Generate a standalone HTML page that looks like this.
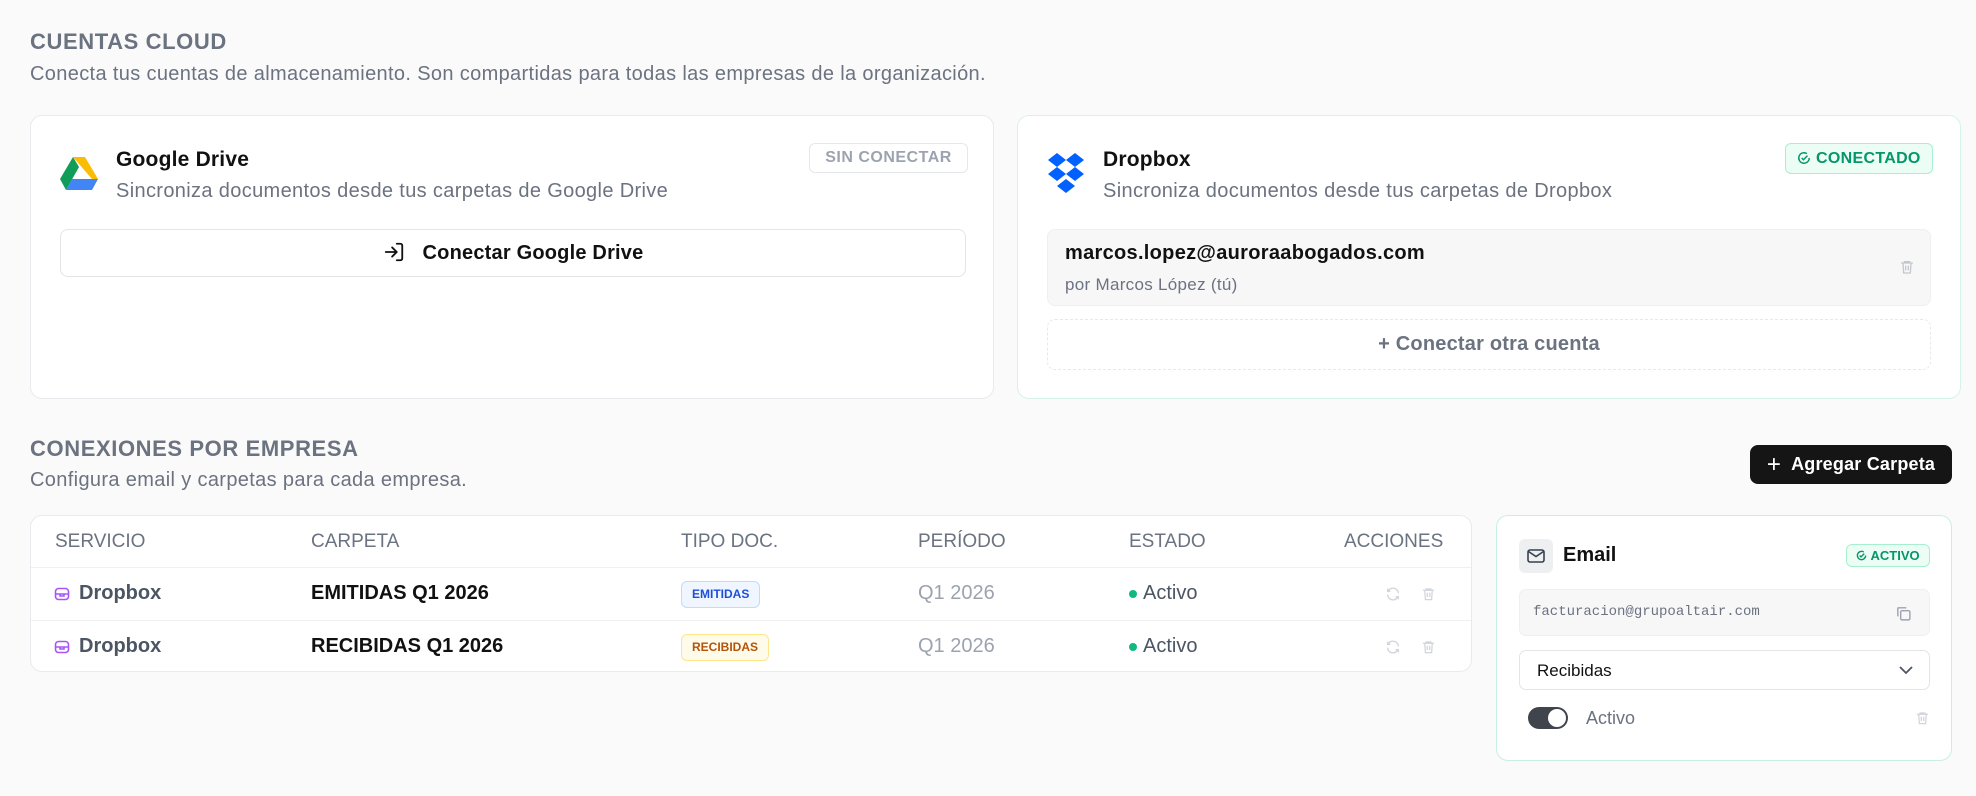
<!DOCTYPE html>
<html><head><meta charset="utf-8"><style>
*{box-sizing:border-box;margin:0;padding:0}
body{width:1976px;height:796px;background:#fafafa;font-family:"Liberation Sans",sans-serif;position:relative;overflow:hidden;color:#111}
.a{position:absolute;white-space:nowrap}
.card{position:absolute;background:#fff;border:1px solid #e8eaed;border-radius:12px}
.h{font-size:22px;font-weight:bold;color:#6b7280;letter-spacing:0.6px}
.sub{font-size:20px;color:#6b7280;letter-spacing:0.35px}
.gray{color:#6b7280}
.th{font-size:19px;color:#6b7280;font-weight:500}
.td{font-size:20px}
.row{position:absolute;left:0;right:0;border-top:1px solid #eef0f2}
.t{font-size:21px;font-weight:bold;letter-spacing:0.2px}
</style></head><body>
<div class="a h" style="left:30px;top:29px">CUENTAS CLOUD</div>
<div class="a sub" style="left:30px;top:63px">Conecta tus cuentas de almacenamiento. Son compartidas para todas las empresas de la organización.</div>

<div class="card" style="left:30px;top:115px;width:964px;height:284px">
  <svg class="a" style="left:29px;top:41px" width="38" height="34" viewBox="0 0 38 34"><polygon points="13,0 25,0 38,22 32,22" fill="#fbbc04"/><polygon points="13,0 19,10 6,33 0,22" fill="#0f9d58"/><polygon points="6,33 12,22 38,22 32,33" fill="#4285f4"/></svg>
  <div class="a t" style="left:85px;top:32px">Google Drive</div>
  <div class="a sub" style="left:85px;top:64px">Sincroniza documentos desde tus carpetas de Google Drive</div>
  <div class="a" style="left:778px;top:27px;width:159px;height:30px;border:1px solid #e5e7eb;border-radius:6px;font-size:16px;font-weight:bold;color:#9ca3af;text-align:center;line-height:28px;letter-spacing:0.5px">SIN CONECTAR</div>
  <div class="a" style="left:29px;top:113px;width:906px;height:48px;border:1px solid #e2e4e8;border-radius:8px;text-align:center;line-height:46px;font-size:20px;font-weight:bold;color:#111;letter-spacing:0.2px">
    <svg style="vertical-align:-4px;margin-right:18px" width="22" height="22" viewBox="0 0 24 24" fill="none" stroke="#111" stroke-width="2" stroke-linecap="round" stroke-linejoin="round"><path d="M15 3h4a2 2 0 0 1 2 2v14a2 2 0 0 1-2 2h-4M10 17l5-5-5-5M15 12H3"/></svg>Conectar Google Drive</div>
</div>

<div class="card" style="left:1017px;top:115px;width:944px;height:284px;border-color:#d6f3e8">
  <svg class="a" style="left:29px;top:37px" width="38" height="42" viewBox="0 0 38 42" fill="#0061fe"><polygon points="10,0 19,7 10,14 1,7"/><polygon points="28,0 37,7 28,14 19,7"/><polygon points="10,14 19,21 10,28 1,21"/><polygon points="28,14 37,21 28,28 19,21"/><polygon points="19,26 28,33 19,40 10,33"/></svg>
  <div class="a t" style="left:85px;top:32px">Dropbox</div>
  <div class="a sub" style="left:85px;top:64px">Sincroniza documentos desde tus carpetas de Dropbox</div>
  <div class="a" style="left:767px;top:27px;width:148px;height:31px;border:1px solid #a7f0cf;background:#ecfdf5;border-radius:6px;font-size:16px;font-weight:bold;color:#059669;text-align:center;line-height:29px;letter-spacing:0.3px">
   <svg style="vertical-align:-2px" width="14" height="14" viewBox="0 0 24 24" fill="none" stroke="#059669" stroke-width="2.5"><path d="M21 12a9 9 0 1 1-4-7.5"/><path d="M8 12l3 3 7-7"/></svg> CONECTADO</div>
  <div class="a" style="left:29px;top:113px;width:884px;height:77px;background:#f7f7f8;border:1px solid #efeff1;border-radius:8px">
    <div class="a" style="left:17px;top:12px;font-size:20px;font-weight:bold;letter-spacing:0.3px">marcos.lopez@auroraabogados.com</div>
    <div class="a gray" style="left:17px;top:45px;font-size:17px;letter-spacing:0.3px">por Marcos López (tú)</div>
    <svg class="a" style="left:851px;top:28px" width="16" height="18" viewBox="0 0 24 24" fill="none" stroke="#c4c7cc" stroke-width="2"><path d="M3 6h18M8 6V4h8v2M6 6l1 15h10l1-15M10 10v7M14 10v7"/></svg>
  </div>
  <div class="a" style="left:29px;top:203px;width:884px;height:51px;border:1.5px dashed #e6e8eb;border-radius:8px;text-align:center;line-height:48px;font-size:20px;font-weight:bold;color:#6b7280;letter-spacing:0.2px">+ Conectar otra cuenta</div>
</div>

<div class="a h" style="left:30px;top:436px">CONEXIONES POR EMPRESA</div>
<div class="a sub" style="left:30px;top:469px">Configura email y carpetas para cada empresa.</div>
<div class="a" style="left:1750px;top:445px;width:202px;height:39px;background:#151515;border-radius:8px;color:#fff;font-size:18px;font-weight:bold;text-align:center;line-height:39px;letter-spacing:0.2px"><span style="font-size:24px;vertical-align:-2px;margin-right:10px;font-weight:normal">+</span>Agregar Carpeta</div>

<div class="card" style="left:30px;top:515px;width:1442px;height:157px">
  <div class="a th" style="left:24px;top:15px">SERVICIO</div>
  <div class="a th" style="left:280px;top:15px">CARPETA</div>
  <div class="a th" style="left:650px;top:15px">TIPO DOC.</div>
  <div class="a th" style="left:887px;top:15px">PERÍODO</div>
  <div class="a th" style="left:1098px;top:15px">ESTADO</div>
  <div class="a th" style="left:1313px;top:15px">ACCIONES</div>
  <div class="row" style="top:51px;height:53px">
    <svg class="a" style="left:23px;top:18px" width="16" height="16" viewBox="0 0 16 16" fill="none" stroke="#a855f7" stroke-width="1.6"><rect x="1.5" y="2.5" width="13" height="11" rx="3"/><path d="M1.5 8h13M6 8v2h4V8"/></svg>
    <div class="a td gray" style="left:48px;top:14px;font-weight:bold;color:#4b5563">Dropbox</div>
    <div class="a td" style="left:280px;top:14px;font-weight:bold">EMITIDAS Q1 2026</div>
    <div class="a" style="left:650px;top:13px;height:27px;padding:0 10px;border:1px solid #bfdbfe;background:#eff6ff;border-radius:6px;font-size:12px;font-weight:bold;color:#1d4ed8;line-height:25px">EMITIDAS</div>
    <div class="a td" style="left:887px;top:14px;color:#9ca3af">Q1 2026</div>
    <div class="a" style="left:1098px;top:22px;width:8px;height:8px;border-radius:50%;background:#10b981"></div>
    <div class="a td" style="left:1112px;top:14px;color:#4b5563">Activo</div>
    <svg class="a" style="left:1354px;top:18px" width="16" height="16" viewBox="0 0 24 24" fill="none" stroke="#d1d5db" stroke-width="2"><path d="M20 11a8 8 0 0 0-14-5l-2 2M4 13a8 8 0 0 0 14 5l2-2M4 4v4h4M20 20v-4h-4"/></svg>
    <svg class="a" style="left:1390px;top:18px" width="15" height="16" viewBox="0 0 24 24" fill="none" stroke="#d1d5db" stroke-width="2"><path d="M3 6h18M8 6V4h8v2M6 6l1 15h10l1-15M10 10v7M14 10v7"/></svg>
  </div>
  <div class="row" style="top:104px;height:53px">
    <svg class="a" style="left:23px;top:18px" width="16" height="16" viewBox="0 0 16 16" fill="none" stroke="#a855f7" stroke-width="1.6"><rect x="1.5" y="2.5" width="13" height="11" rx="3"/><path d="M1.5 8h13M6 8v2h4V8"/></svg>
    <div class="a td gray" style="left:48px;top:14px;font-weight:bold;color:#4b5563">Dropbox</div>
    <div class="a td" style="left:280px;top:14px;font-weight:bold">RECIBIDAS Q1 2026</div>
    <div class="a" style="left:650px;top:13px;height:27px;padding:0 10px;border:1px solid #fde68a;background:#fffbeb;border-radius:6px;font-size:12px;font-weight:bold;color:#b45309;line-height:25px">RECIBIDAS</div>
    <div class="a td" style="left:887px;top:14px;color:#9ca3af">Q1 2026</div>
    <div class="a" style="left:1098px;top:22px;width:8px;height:8px;border-radius:50%;background:#10b981"></div>
    <div class="a td" style="left:1112px;top:14px;color:#4b5563">Activo</div>
    <svg class="a" style="left:1354px;top:18px" width="16" height="16" viewBox="0 0 24 24" fill="none" stroke="#d1d5db" stroke-width="2"><path d="M20 11a8 8 0 0 0-14-5l-2 2M4 13a8 8 0 0 0 14 5l2-2M4 4v4h4M20 20v-4h-4"/></svg>
    <svg class="a" style="left:1390px;top:18px" width="15" height="16" viewBox="0 0 24 24" fill="none" stroke="#d1d5db" stroke-width="2"><path d="M3 6h18M8 6V4h8v2M6 6l1 15h10l1-15M10 10v7M14 10v7"/></svg>
  </div>
</div>

<div class="card" style="left:1496px;top:515px;width:456px;height:246px;border-color:#c8f0df">
  <div class="a" style="left:22px;top:23px;width:34px;height:34px;background:#eeeff1;border-radius:6px">
    <svg class="a" style="left:8px;top:9px" width="18" height="16" viewBox="0 0 18 16" fill="none" stroke="#374151" stroke-width="1.6"><rect x="1" y="2" width="16" height="12" rx="2"/><path d="M1.5 3.5l7.5 5 7.5-5"/></svg>
  </div>
  <div class="a" style="left:66px;top:28px;font-size:20px;font-weight:bold">Email</div>
  <div class="a" style="left:349px;top:28px;width:84px;height:23px;border:1px solid #a7f0cf;background:#ecfdf5;border-radius:6px;font-size:13px;font-weight:bold;color:#059669;text-align:center;line-height:21px">
    <svg style="vertical-align:-1px" width="11" height="11" viewBox="0 0 24 24" fill="none" stroke="#059669" stroke-width="3"><path d="M21 12a9 9 0 1 1-4-7.5"/><path d="M8 12l3 3 7-7"/></svg> ACTIVO</div>
  <div class="a" style="left:22px;top:73px;width:411px;height:47px;background:#f7f7f8;border:1px solid #efeff1;border-radius:7px">
    <div class="a" style="left:13px;top:14px;font-family:'Liberation Mono',monospace;font-size:14px;color:#6b7280">facturacion@grupoaltair.com</div>
    <svg class="a" style="left:375px;top:15px" width="17" height="17" viewBox="0 0 24 24" fill="none" stroke="#9ca3af" stroke-width="2"><rect x="8" y="8" width="13" height="13" rx="2"/><path d="M4 16V5a1 1 0 0 1 1-1h11"/></svg>
  </div>
  <div class="a" style="left:22px;top:134px;width:411px;height:40px;border:1px solid #e2e4e8;border-radius:7px">
    <div class="a" style="left:17px;top:10px;font-size:17px">Recibidas</div>
    <svg class="a" style="left:378px;top:13px" width="16" height="12" viewBox="0 0 16 12" fill="none" stroke="#4b5563" stroke-width="1.8"><path d="M2 3l6 6 6-6"/></svg>
  </div>
  <div class="a" style="left:31px;top:191px;width:40px;height:22px;background:#3f444d;border-radius:11px"><div class="a" style="left:20px;top:2px;width:18px;height:18px;border-radius:50%;background:#fff"></div></div>
  <div class="a" style="left:89px;top:192px;font-size:18px;color:#6b7280">Activo</div>
  <svg class="a" style="left:418px;top:194px" width="15" height="16" viewBox="0 0 24 24" fill="none" stroke="#d1d5db" stroke-width="2"><path d="M3 6h18M8 6V4h8v2M6 6l1 15h10l1-15M10 10v7M14 10v7"/></svg>
</div>
</body></html>
